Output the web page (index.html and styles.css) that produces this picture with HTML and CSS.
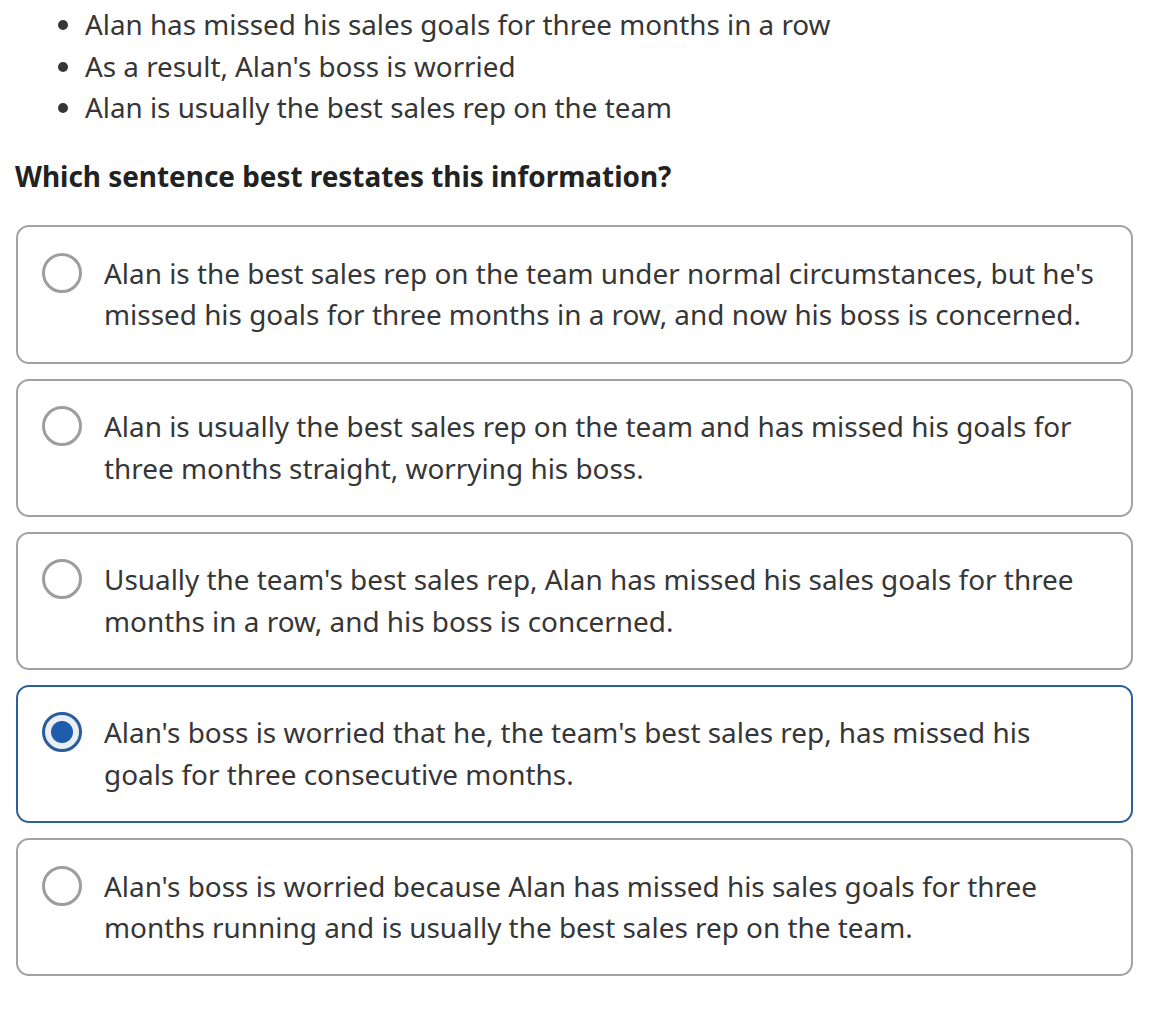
FILE: index.html
```html
<!DOCTYPE html>
<html>
<head>
<meta charset="utf-8">
<link rel="stylesheet" href="styles.css">
</head>
<body>
<main class="page">
  <ul class="facts">
    <li>Alan has missed his sales goals for three months in a row</li>
    <li>As a result, Alan's boss is worried</li>
    <li>Alan is usually the best sales rep on the team</li>
  </ul>
  <p class="question">Which sentence best restates this information?</p>
  <div class="choices">
    <label class="choice">
      <span class="radio"></span>
      <span class="choice-text">Alan is the best sales rep on the team under normal circumstances, but he's missed his goals for three months in a row, and now his boss is concerned.</span>
    </label>
    <label class="choice">
      <span class="radio"></span>
      <span class="choice-text">Alan is usually the best sales rep on the team and has missed his goals for three months straight, worrying his boss.</span>
    </label>
    <label class="choice">
      <span class="radio"></span>
      <span class="choice-text">Usually the team's best sales rep, Alan has missed his sales goals for three months in a row, and his boss is concerned.</span>
    </label>
    <label class="choice selected">
      <span class="radio"></span>
      <span class="choice-text">Alan's boss is worried that he, the team's best sales rep, has missed his goals for three consecutive months.</span>
    </label>
    <label class="choice">
      <span class="radio"></span>
      <span class="choice-text">Alan's boss is worried because Alan has missed his sales goals for three months running and is usually the best sales rep on the team.</span>
    </label>
  </div>
</main>
</body>
</html>
```

FILE: styles.css
```css
html, body {
  margin: 0;
  padding: 0;
  background: #ffffff;
}

body {
  font-family: "Noto Sans", "Open Sans", sans-serif;
  font-size: 27.9px;
  line-height: 41.6px;
  color: #363636;
}

.page {
  width: 1117px;
  padding: 4px 0 0 16px;
}

.facts {
  margin: 0;
  padding-left: 69px;
  font-size: 27.8px;
}

.facts li {
  margin: 0;
}

.question {
  margin: 27px 0 28px -1px;
  font-weight: 700;
  color: #222222;
}

.choices {
  display: flex;
  flex-direction: column;
  gap: 15px;
}

.choice {
  display: flex;
  align-items: flex-start;
  gap: 22px;
  padding: 25.5px 30px 25.5px 24px;
  border: 2px solid #a2a2a2;
  border-radius: 13px;
  background: #ffffff;
}

.choice.selected {
  border-color: #2b5f9e;
}

.radio {
  flex: none;
  box-sizing: border-box;
  width: 40px;
  height: 40px;
  margin-top: 0;
  border: 3px solid #9d9d9d;
  border-radius: 50%;
  background: #ffffff;
}

.selected .radio {
  border: 3.5px solid #2a5b9b;
  background: radial-gradient(circle, #1f5cac 0 10.5px, #e9edf4 11.5px);
}

.choice-text {
  flex: 1;
}
```
